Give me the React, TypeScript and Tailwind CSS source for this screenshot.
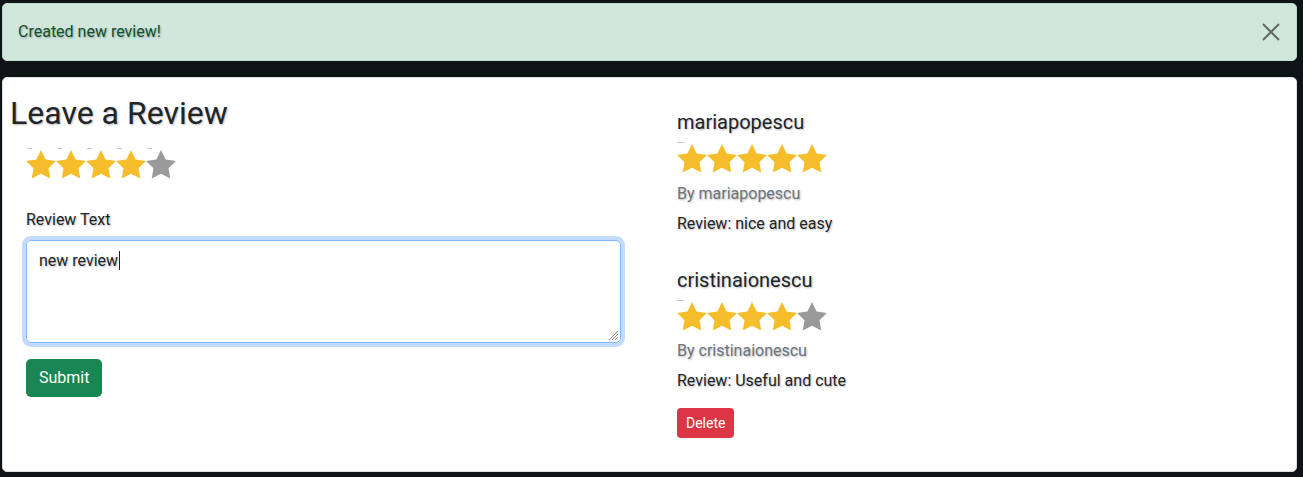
import React from 'react';

const STAR = 'M12 2l3.09 6.26L22 9.27l-5 4.87 1.18 6.88L12 17.77l-6.18 3.25L7 14.14 2 9.27l6.91-1.01L12 2z';

function Star({ on }: { on: boolean }) {
    return (
        <svg width="30" height="28.5" viewBox="2 2 20 19.02" className="block">
            <path d={STAR} fill={on ? '#f6bd2a' : '#9a9a9a'} />
        </svg>
    );
}

// stars for the form: every star has its small dash above it
function StarPicker({ value }: { value: number }) {
    return (
        <div className="flex">
            {[1, 2, 3, 4, 5].map((n) => (
                <div key={n} className="flex flex-col">
                    <div className="ml-[1px] h-[1px] w-[5px] bg-[#c8c8c8]" />
                    <div className="mt-[1px]">
                        <Star on={n <= value} />
                    </div>
                </div>
            ))}
        </div>
    );
}

function StarRow({ value }: { value: number }) {
    return (
        <div className="flex flex-col">
            <div className="h-[1px] w-[7px] bg-[#c8c8c8]" />
            <div className="mt-[1px] flex">
                {[1, 2, 3, 4, 5].map((n) => (
                    <Star key={n} on={n <= value} />
                ))}
            </div>
        </div>
    );
}

const reviews = [
    { user: 'mariapopescu', rating: 5, text: 'nice and easy', mine: false },
    { user: 'cristinaionescu', rating: 4, text: 'Useful and cute', mine: true },
];

export default function App() {
    return (
        <div className="min-h-[477px] bg-[#0e1416] pl-[2px] pr-[6px] pt-[3px] pb-[6px] font-['Roboto',_'Liberation_Sans',_sans-serif] [text-shadow:1px_1px_2px_rgba(0,0,0,0.28)]">
            {/* alert */}
            <div className="flex h-[58px] items-center justify-between rounded-[5px] border border-[#badbcc] bg-[#d1e7dd] pl-[15px] pr-[16px] text-[16px] text-[#0f5132]">
                <span>Created new review!</span>
                <svg width="18" height="18" viewBox="0 0 18 18">
                    <path d="M1 1L17 17M17 1L1 17" stroke="#5f6b66" strokeWidth="2" />
                </svg>
            </div>

            {/* card */}
            <div className="mt-[16px] flex h-[395px] rounded-[5px] border border-[#dee2e6] bg-white pl-[7px] pt-[16px] text-[#212529]">
                <div className="w-[627px]">
                    <h1 className="text-[32px] leading-[38px] font-normal">Leave a Review</h1>
                    <div className="pl-[16px]">
                        <div className="mt-[16px]">
                            <StarPicker value={4} />
                        </div>
                        <label className="mt-[29px] block text-[16px] leading-[24px]">Review Text</label>
                        <div className="relative mt-[8px] h-[103px] w-[595px] rounded-[5px] border border-[#86b7fe] px-[12px] py-[6px] text-[16px] leading-[24px] shadow-[0_0_0_4px_rgba(13,110,253,0.25)]">
                            new review<span className="ml-[1px] inline-block h-[19px] w-[1px] translate-y-[4px] bg-[#212529] align-baseline" />
                            <svg width="12" height="12" viewBox="0 0 12 12" className="absolute right-[1px] bottom-[1px]">
                                <path d="M11 2L2 11M11 5L5 11M11 8L8 11" stroke="#888" strokeWidth="1" />
                            </svg>
                        </div>
                        <button className="mt-[16px] h-[38px] rounded-[5px] bg-[#198754] px-[13px] text-[16px] text-white">Submit</button>
                    </div>
                </div>

                <div className="ml-[40px] pt-[16px]">
                    {reviews.map((r) => (
                        <div key={r.user} className="mb-[32px]">
                            <h5 className="text-[20px] leading-[24px] font-normal">{r.user}</h5>
                            <div className="mt-[8px]">
                                <StarRow value={r.rating} />
                            </div>
                            <p className="mt-[9px] text-[16px] leading-[24px] text-[#6c757d]">By {r.user}</p>
                            <p className="mt-[6px] text-[16px] leading-[24px]">Review: {r.text}</p>
                            {r.mine && (
                                <button className="mt-[15px] h-[30px] rounded-[4px] bg-[#dc3545] px-[9px] text-[14px] text-white">Delete</button>
                            )}
                        </div>
                    ))}
                </div>
            </div>
        </div>
    );
}
